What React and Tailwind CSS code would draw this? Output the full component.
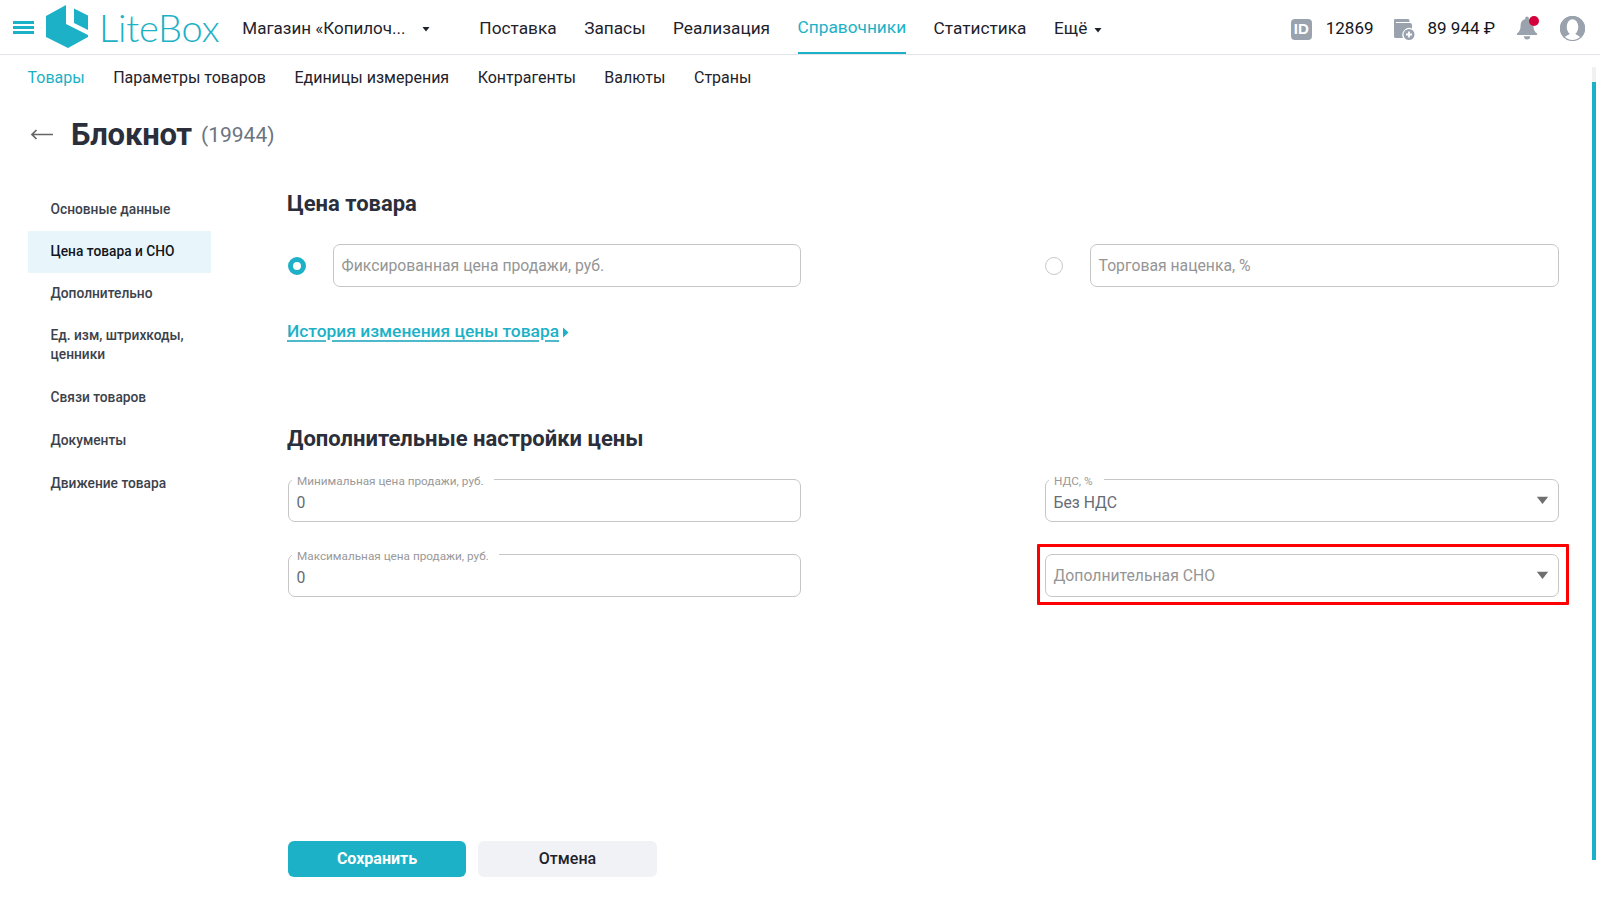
const topNav = ["Поставка", "Запасы", "Реализация", "Справочники", "Статистика"];
const subNav = ["Товары", "Параметры товаров", "Единицы измерения", "Контрагенты", "Валюты", "Страны"];
const sideNav = ["Основные данные", "Цена товара и СНО", "Дополнительно", "Ед. изм, штрихкоды, ценники", "Связи товаров", "Документы", "Движение товара"];

const Caret = ({ className }) => (
   <svg viewBox="0 0 8 6" className={className}>
      <path d="M0.5 1h7L4 5.500z" fill="currentColor" />
   </svg>
);

const Logo = () => (
   <svg width="44" height="46" viewBox="0 0 44 46" className="shrink-0">
      <path d="M20 0 L0 11 L0 32 L22 43 L42 32 L42 30 L24 21 L20 19 Z" fill="#1cb1c6" />
      <path d="M28 3.500 L42 10.500 L42 25 L28 18 Z" fill="#1cb1c6" />
   </svg>
);

const Field = ({ label, value, placeholder, select, notch }) => (
   <div className="relative h-[43px] rounded-[7px] border border-[#c6c6c6] px-[7.5px] flex items-center justify-between">
      {label && (
         <span className={`absolute left-[3px] -top-[5px] bg-white pl-[5px] text-[11.75px] leading-[12px] text-[#999] ${notch}`}>{label}</span>
      )}
      <span className={`text-[15.75px] ${label ? "pt-[4px]" : ""} ${value ? "text-[#666c74]" : "text-[#959595]"}`}>{value || placeholder}</span>
      {select && <Caret className="w-[13px] h-[10px] mb-[1px] text-[#6f6f6f] mr-[2px]" />}
   </div>
);

const Radio = ({ checked }) =>
   checked ? (
      <span className="block w-[18px] h-[18px] rounded-full border-[5px] border-[#1cb1c6] bg-white" />
   ) : (
      <span className="block w-[18px] h-[18px] rounded-full border border-[#c9c9c9] bg-white" />
   );

export default function App() {
   return (
      <div className="relative w-[1600px] h-[900px] overflow-hidden bg-white font-['Roboto',sans-serif] text-[#1e222b]">
         <header className="h-[55px] border-b border-[#e3e3ea] flex items-center">
            <div className="ml-[13px] w-[21px] flex flex-col gap-[2px]">
               <span className="h-[3px] bg-[#1cb1c6]" />
               <span className="h-[3px] bg-[#1cb1c6]" />
               <span className="h-[3px] bg-[#1cb1c6]" />
            </div>
            <div className="ml-[12px] mt-[2px]">
               <Logo />
            </div>
            <span className="ml-[9px] font-['Lato',sans-serif] font-light text-[38px] leading-none text-[#1cb1c6] tracking-[-0.2px]">LiteBox</span>
            <div className="ml-[23px] mt-[4px] flex items-center text-[17px] w-[188px]">
               <span>Магазин «Копилоч...</span>
               <Caret className="ml-auto w-[8px] h-[6px] text-[#1e222b]" />
            </div>
            <nav className="ml-[49px] pt-[4px] flex h-full items-center gap-[27.5px] text-[17.25px]">
               {topNav.map((item) => (
                  <span key={item} className={item === "Справочники" ? "h-full flex items-center border-b-2 border-[#1cb1c6] text-[#1cb1c6]" : ""}>
                     {item}
                  </span>
               ))}
               <span className="flex items-center gap-[7px]">
                  Ещё
                  <Caret className="w-[8px] h-[6px] mt-[2px]" />
               </span>
            </nav>
            <div className="ml-auto mt-[4px] flex items-center text-[#12151b] text-[17px]">
               <span className="w-[21px] h-[21px] rounded-[4px] bg-[#9aa3ad] text-white text-[15px] font-bold flex items-center justify-center font-['Liberation_Sans',sans-serif]">ID</span>
               <span className="ml-[14px]">12869</span>
               <svg width="22" height="23" viewBox="0 0 22 23" className="ml-[19px]">
                  <path d="M2 1h13a1.500 1.500 0 0 1 1.500 1.500V4H3v1h14a2 2 0 0 1 2 2v3.500a7 7 0 0 0-9 9.500H2.500A1.500 1.500 0 0 1 1 18.500V2a1 1 0 0 1 1-1z" fill="#9aa3ad" />
                  <circle cx="16" cy="16.500" r="5.500" fill="#9aa3ad" />
                  <path d="M16 13.500v6M13 16.500h6" stroke="#fff" strokeWidth="1.800" />
               </svg>
               <span className="ml-[13px] mr-[21px]">89 944 ₽</span>
               <div className="relative w-[22px] h-[25px] mb-[2px]">
                  <svg width="22" height="25" viewBox="0 0 24 27">
                     <path d="M12 3c-4.500 0-7 3-7 7.500 0 4.500-1.500 6.500-4 8.500v1.500h22V19c-2.500-2-4-4-4-8.500C19 6 16.500 3 12 3z" fill="#9aa3ad" />
                     <circle cx="12" cy="2.500" r="2" fill="#9aa3ad" />
                     <path d="M8.500 22a3.500 3.500 0 0 0 7 0z" fill="#9aa3ad" />
                  </svg>
                  <span className="absolute -right-[1px] top-0 w-[10px] h-[10px] rounded-full bg-[#d4003c]" />
               </div>
               <svg width="25" height="25" viewBox="0 0 26 26" className="ml-[22px] mr-[15px] mb-[2px]">
                  <circle cx="13" cy="13" r="13" fill="#9aa3ad" />
                  <ellipse cx="13" cy="11.500" rx="6" ry="8" fill="#fff" />
                  <path d="M4 23.500c2-3.500 5-3.500 6-5h6c1 1.500 4 1.500 6 5a13 13 0 0 1-18 0z" fill="#fff" />
                  <circle cx="13" cy="13" r="12.500" fill="none" stroke="#9aa3ad" strokeWidth="1.300" />
               </svg>
            </div>
         </header>

         <nav className="h-[45px] pl-[27.5px] flex items-center gap-[28.5px] text-[16px]">
            {subNav.map((item) => (
               <span key={item} className={item === "Товары" ? "text-[#1cb1c6]" : ""}>
                  {item}
               </span>
            ))}
         </nav>

         <div className="h-[63px] pl-[31px] pt-[8px] flex items-center">
            <svg width="22" height="11" viewBox="0 0 22 11" className="mr-[18px] mb-[3px] shrink-0">
               <path d="M1 5.500h21M5.500 1L1 5.500L5.500 10" fill="none" stroke="#666" strokeWidth="1.700" />
            </svg>
            <h1 className="text-[31px] font-bold text-[#2a2f3b] tracking-[-0.2px]">Блокнот</h1>
            <span className="ml-[9px] text-[21px] text-[#6b7480]">(19944)</span>
         </div>

         <main className="flex pt-[27px]">
            <aside className="ml-[28px] -mt-[1px] w-[183px] shrink-0 text-[13.75px] font-medium text-[#3c424c]">
               {sideNav.map((item, i) => (
                  <div key={item} className={`flex items-center pl-[22.5px] pr-[20px] pb-[1px] leading-[19px] ${item === "Цена товара и СНО" ? "bg-[#e8f6fc] text-[#12151b]" : ""} ${item.startsWith("Ед.") ? "h-[61px]" : i > 3 ? "h-[43px]" : "h-[42px]"}`}>
                     {item}
                  </div>
               ))}
            </aside>

            <section className="ml-[77px] w-[1271px]">
               <h2 className="-ml-[1px] text-[22px] leading-[28px] font-bold text-[#2a2f3b]">Цена товара</h2>
               <div className="mt-[26px] flex">
                  <div className="flex items-center w-[757px]">
                     <div className="w-[45px] shrink-0">
                        <Radio checked />
                     </div>
                     <div className="w-[468px]">
                        <Field placeholder="Фиксированная цена продажи, руб." />
                     </div>
                  </div>
                  <div className="flex items-center flex-1">
                     <div className="w-[45px] shrink-0">
                        <Radio />
                     </div>
                     <div className="flex-1">
                        <Field placeholder="Торговая наценка, %" />
                     </div>
                  </div>
               </div>
               <div className="-ml-[1px] mt-[31px] flex items-center gap-[4px] text-[17.4px] font-medium text-[#1cb1c6]">
                  <span className="underline decoration-2 decoration-[#4fb9cc] underline-offset-[3px]">История изменения цены товара</span>
                  <svg width="6" height="11" viewBox="0 0 6 11" className="mt-[2px]">
                     <path d="M0 0.500L5.500 5.500L0 10.500z" fill="#1cb1c6" />
                  </svg>
               </div>

               <h2 className="-ml-[1px] mt-[81px] text-[22px] leading-[28px] font-bold text-[#2a2f3b]">Дополнительные настройки цены</h2>
               <div className="mt-[26px] flex">
                  <div className="w-[757px]">
                     <div className="w-[513px] flex flex-col gap-[32px]">
                        <Field label="Минимальная цена продажи, руб." notch="pr-[10px]" value="0" />
                        <Field label="Максимальная цена продажи, руб." notch="pr-[10px]" value="0" />
                     </div>
                  </div>
                  <div className="flex-1 flex flex-col gap-[32px]">
                     <Field label="НДС, %" notch="pr-[11px]" value="Без НДС" select />
                     <div className="relative">
                        <Field placeholder="Дополнительная СНО" select />
                        <div className="absolute -left-[8px] -right-[10px] -top-[10px] -bottom-[8px] border-[3px] border-[#ff0000] rounded-[1px]" />
                     </div>
                  </div>
               </div>

               <div className="mt-[244px] flex gap-[12px]">
                  <button className="w-[178px] h-[36px] rounded-[6px] bg-[#1cb1c6] text-white text-[16px] font-bold">Сохранить</button>
                  <button className="w-[179px] h-[36px] rounded-[6px] bg-[#f1f2f6] text-[16px] font-medium text-[#1e222b]">Отмена</button>
               </div>
            </section>
         </main>

         <div className="absolute right-[4px] top-[67px] w-[4px] h-[793px] bg-[#f1f1f1]">
            <div className="mt-[15px] h-[778px] bg-[#1cb1c6]" />
         </div>
      </div>
   );
}
